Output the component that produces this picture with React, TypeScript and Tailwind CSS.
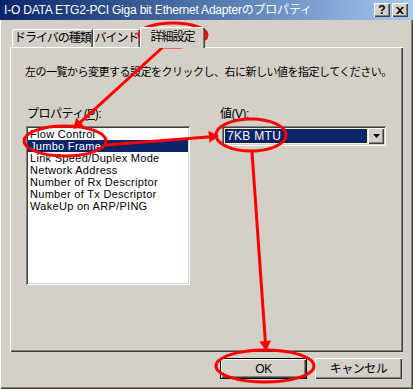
import React from "react";

const FONT = "font-['Liberation_Sans','Noto_Sans_CJK_JP',sans-serif]";

const ITEMS = [
  "Flow Control",
  "Jumbo Frame",
  "Link Speed/Duplex Mode",
  "Network Address",
  "Number of Rx Descriptor",
  "Number of Tx Descriptor",
  "WakeUp on ARP/PING",
];

// raised 3D edge used by buttons, tabs and title buttons
const RAISED =
  "shadow-[inset_1px_1px_#ffffff,inset_-1px_-1px_#404040,inset_-2px_-2px_#808080]";
const SUNKEN =
  "shadow-[inset_1px_1px_#808080,inset_-1px_-1px_#ffffff,inset_2px_2px_#404040,inset_-2px_-2px_#d4d0c8]";

function arrowHead(x1: number, y1: number, x2: number, y2: number) {
  const len = Math.hypot(x2 - x1, y2 - y1);
  const dx = (x2 - x1) / len;
  const dy = (y2 - y1) / len;
  const bx = x2 - dx * 10;
  const by = y2 - dy * 10;
  const px = -dy * 6;
  const py = dx * 6;
  return `${x2},${y2} ${bx + px},${by + py} ${bx - px},${by - py}`;
}

function Arrow({ x1, y1, x2, y2 }: { x1: number; y1: number; x2: number; y2: number }) {
  const len = Math.hypot(x2 - x1, y2 - y1);
  const ex = x2 - ((x2 - x1) / len) * 8;
  const ey = y2 - ((y2 - y1) / len) * 8;
  return (
    <g>
      <line x1={x1} y1={y1} x2={ex} y2={ey} stroke="#ff0000" strokeWidth={3} />
      <polygon points={arrowHead(x1, y1, x2, y2)} fill="#ff0000" />
    </g>
  );
}

function Annotations() {
  return (
    <svg className="absolute inset-0 pointer-events-none" width={413} height={389}>
      <g fill="none" stroke="#ff0000" strokeWidth={3}>
        <ellipse cx={173} cy={35} rx={34} ry={12} />
        <ellipse cx={65} cy={141} rx={41} ry={15} />
        <ellipse cx={251} cy={135} rx={35} ry={16} />
        <ellipse cx={265} cy={366} rx={49} ry={16} />
      </g>
      <Arrow x1={163} y1={47} x2={73} y2={129} />
      <Arrow x1={106} y1={145} x2={219} y2={136} />
      <Arrow x1={252} y1={152} x2={266} y2={351} />
    </svg>
  );
}

function Tab({ label, w, active }: { label: string; w: string; active?: boolean }) {
  return (
    <div
      className={`${w} flex items-center justify-center rounded-t-[2px] bg-[#d4d0c8] shadow-[inset_1px_1px_#ffffff,inset_-1px_0_#404040,inset_-2px_0_#808080] ${
        active ? "h-[21px] -mb-px z-10 pb-[2px]" : "h-[18px]"
      }`}
    >
      <span className="text-[12px] tracking-[-1px] leading-none text-black">{label}</span>
    </div>
  );
}

function Btn({ label, focused }: { label: string; focused?: boolean }) {
  return (
    <div
      className={`w-[87px] h-[21px] flex items-center justify-center bg-[#d4d0c8] text-[12px] tracking-[-0.5px] text-black ${
        focused
          ? "shadow-[inset_1px_1px_#000000,inset_-1px_-1px_#000000,inset_2px_2px_#ffffff,inset_-2px_-2px_#404040,inset_-3px_-3px_#808080]"
          : RAISED
      }`}
    >
      {label}
    </div>
  );
}

export default function App() {
  return (
    <div
      className={`${FONT} relative w-[413px] h-[389px] overflow-hidden bg-[#d4d0c8] shadow-[inset_1px_0_#ffffff,inset_-1px_-1px_#404040,inset_-2px_-2px_#808080] flex flex-col`}
    >
      {/* title bar */}
      <div className="h-[20px] flex items-center bg-gradient-to-r from-[#0a246a] to-[#a6caf0] pl-[4px] pr-[5px]">
        <span className="flex-1 text-[12px] text-white tracking-[-0.2px] whitespace-nowrap">
          I-O DATA ETG2-PCI Giga bit Ethernet Adapterのプロパティ
        </span>
        <div className={`w-[16px] h-[14px] flex items-center justify-center bg-[#d4d0c8] ${RAISED}`}>
          <span className="text-[12px] font-bold leading-none text-black">?</span>
        </div>
        <div className={`ml-[2px] w-[16px] h-[14px] flex items-center justify-center bg-[#d4d0c8] ${RAISED}`}>
          <svg width="8" height="7" viewBox="0 0 8 7">
            <path d="M0 0h2l2 2 2-2h2L5 3.5 8 7H6L4 5 2 7H0l3-3.5z" fill="#000" />
          </svg>
        </div>
      </div>

      {/* tabs */}
      <div className="mt-[7px] ml-[12px] h-[20px] flex items-end">
        <Tab label="ドライバの種類" w="w-[81px]" />
        <Tab label="バインド" w="w-[47px]" />
        <Tab label="詳細設定" w="w-[65px]" active />
      </div>

      {/* panel */}
      <div className="ml-[10px] w-[393px] h-[305px] bg-[#d4d0c8] shadow-[inset_1px_1px_#ffffff,inset_-1px_-1px_#404040,inset_-2px_-2px_#808080] pt-[19px] pl-[15px]">
        <div className="text-[11px] tracking-[-0.5px] leading-[12px] text-black whitespace-nowrap">
          左の一覧から変更する設定をクリックし、右に新しい値を指定してください。
        </div>
        <div className="mt-[29px] flex">
          <div className="w-[164px] ml-px">
            <div className="text-[12px] tracking-[-0.5px] leading-[14px] text-black pl-[1px]">
              プロパティ(<span className="underline">P</span>):
            </div>
            <div className={`mt-[5px] h-[159px] bg-white ${SUNKEN} p-[2px]`}>
              {ITEMS.map((it) => (
                <div
                  key={it}
                  className={`h-[12px] leading-[12px] text-[11px] tracking-[0.3px] pl-[2px] whitespace-nowrap ${
                    it === "Jumbo Frame" ? "bg-[#0a246a] text-white" : "text-black"
                  }`}
                >
                  {it}
                </div>
              ))}
            </div>
          </div>
          <div className="ml-[32px] w-[164px]">
            <div className="text-[12px] tracking-[-0.5px] leading-[14px] text-black -ml-[2px]">
              値(<span className="underline">V</span>):
            </div>
            <div className={`mt-[5px] h-[20px] bg-white ${SUNKEN} p-[2px] flex`}>
              <div className="flex-1 m-px bg-[#0a246a] outline outline-1 outline-dotted outline-[#f0e68c] flex items-center pl-[2px]">
                <span className="text-[12px] text-white leading-none tracking-[0.3px]">7KB MTU</span>
              </div>
              <div className={`w-[16px] bg-[#d4d0c8] ${RAISED} flex items-center justify-center`}>
                <svg width="7" height="4" viewBox="0 0 7 4">
                  <path d="M0 0h7L3.5 4z" fill="#000" />
                </svg>
              </div>
            </div>
          </div>
        </div>
      </div>

      {/* buttons */}
      <div className="mt-[6px] ml-[220px] flex gap-[8px]">
        <Btn label="OK" focused />
        <Btn label="キャンセル" />
      </div>

      <Annotations />
    </div>
  );
}
